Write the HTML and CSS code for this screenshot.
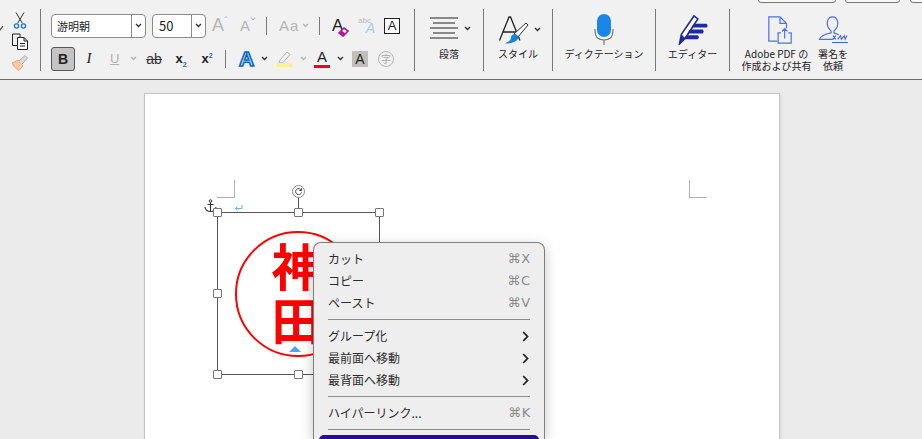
FILE: index.html
```html
<!DOCTYPE html>
<html lang="ja">
<head>
    <meta charset="UTF-8">
    <meta name="viewport" content="width=device-width, initial-scale=1.0">
    <title>Word</title>
    <link rel="stylesheet" href="styles.css">
</head>
<body>
    <header class="ribbon">
        <!-- bits of the title bar buttons peeking in from above -->
        <span class="peek peek-a"></span>
        <span class="peek peek-b"></span>
        <span class="peek peek-c"></span>
        <svg class="peek-chevron" width="4" height="6" viewBox="0 0 4 6"><path d="M-2 3 L0 5 L3 1" fill="none" stroke="#444" stroke-width="1.2"/></svg>

        <div class="group group-clip">
            <svg width="14" height="17" viewBox="0 0 14 17">
                <path d="M3 0.5 L9.5 11.5 M11 0.5 L4.5 11.5" fill="none" stroke="#333" stroke-width="1"/>
                <circle cx="3.5" cy="14" r="2.1" fill="none" stroke="#1f78c8" stroke-width="1.4"/>
                <circle cx="10.5" cy="14" r="2.1" fill="none" stroke="#1f78c8" stroke-width="1.4"/>
            </svg>
            <svg width="18" height="17" viewBox="0 0 18 17">
                <path d="M7 12.5 H1.5 V1 H9 V4" fill="none" stroke="#222" stroke-width="1"/>
                <path d="M6.5 4.5 H13 L16.5 8 V16.5 H6.5 Z M13 4.5 V8 H16.5 M9 10.5 H14 M9 13 H14" fill="#fff" stroke="#222" stroke-width="1"/>
            </svg>
            <svg width="18" height="17" viewBox="0 0 18 17">
                <path d="M1 9 L7 6 L12 12 L8 16.5 Q3 14 1 9 Z" fill="#f6c9a8" stroke="#f0a878" stroke-width="1"/>
                <path d="M8 7 L14 1.5 L16.5 4 L11 10" fill="#ddd" stroke="#aaa" stroke-width="1"/>
            </svg>
        </div>

        <div class="group group-font">
            <div class="row">
                <div class="combo combo-font">
                    <span class="combo-value">游明朝</span>
                    <span class="combo-arrow"><svg class="chev" width="7" height="5" viewBox="0 0 7 5"><path d="M1 1 L3.5 3.5 L6 1"/></svg></span>
                </div>
                <div class="combo combo-size">
                    <span class="combo-value">50</span>
                    <span class="combo-arrow"><svg class="chev" width="7" height="5" viewBox="0 0 7 5"><path d="M1 1 L3.5 3.5 L6 1"/></svg></span>
                </div>
                <span class="glyph grow-a">A<svg width="6" height="4" viewBox="0 0 6 4"><path d="M1 3.5 L3 1 L5 3.5" fill="none" stroke="#8fb6d8"/></svg></span>
                <span class="glyph shrink-a">A<svg width="6" height="4" viewBox="0 0 6 4"><path d="M1 .5 L3 3 L5 .5" fill="none" stroke="#8fb6d8"/></svg></span>
                <span class="vline vline-a"></span>
                <span class="glyph case-a">Aa</span>
                <svg class="chev chev-off case-chev" width="7" height="5" viewBox="0 0 7 5"><path d="M1 1 L3.5 3.5 L6 1"/></svg>
                <span class="vline vline-b"></span>
                <span class="clear-a">A<svg width="11" height="10" viewBox="0 0 11 10"><path d="M1 6 L6 1 L10 4 L5 9 Z" fill="#fff" stroke="#b0189c" stroke-width="1.6"/><path d="M1 6 L3.5 3.5 L7.5 6.5 L5 9 Z" fill="#b0189c"/></svg></span>
                <span class="effect-a"><small>abc</small><b>A</b></span>
                <span class="box-a">A</span>
            </div>
            <div class="row">
                <span class="btn-bold">B</span>
                <span class="tx-italic">I</span>
                <span class="tx-under">U</span>
                <svg class="chev chev-off under-chev" width="7" height="5" viewBox="0 0 7 5"><path d="M1 1 L3.5 3.5 L6 1"/></svg>
                <span class="tx-strike">ab</span>
                <span class="tx-sub">x<sub>2</sub></span>
                <span class="tx-sup">x<sup>2</sup></span>
                <span class="vline vline-c"></span>
                <span class="fx-a">A</span>
                <svg class="chev fx-chev" width="7" height="5" viewBox="0 0 7 5"><path d="M1 1 L3.5 3.5 L6 1"/></svg>
                <svg class="marker" width="17" height="17" viewBox="0 0 17 17">
                    <path d="M4 10 L11 2 L14 4.5 L7 12.5 L3 13 Z" fill="none" stroke="#b5b5b5" stroke-width="1"/>
                    <rect x="0.5" y="13" width="16" height="4" fill="#f6f29a"/>
                </svg>
                <svg class="chev chev-off marker-chev" width="7" height="5" viewBox="0 0 7 5"><path d="M1 1 L3.5 3.5 L6 1"/></svg>
                <span class="color-a">A</span>
                <svg class="chev color-chev" width="7" height="5" viewBox="0 0 7 5"><path d="M1 1 L3.5 3.5 L6 1"/></svg>
                <span class="shade-a">A</span>
                <span class="ruby-a">字</span>
            </div>
        </div>

        <div class="group group-para">
            <div class="big-icon">
                <svg width="29" height="22" viewBox="0 0 29 22">
                    <path d="M1 1 H29 M4 6 H26 M1 11 H29 M4 16 H26 M1 21 H29" stroke="#222" stroke-width="1"/>
                </svg>
                <svg class="chev" width="7" height="5" viewBox="0 0 7 5"><path d="M1 1 L3.5 3.5 L6 1"/></svg>
            </div>
            <span class="label">段落</span>
        </div>

        <div class="group group-style">
            <div class="big-icon">
                <svg width="30" height="28" viewBox="0 0 30 28">
                    <path d="M0.5 24.5 L10 1 H11.5 L21 24.5 M4 16 H17.5" fill="none" stroke="#222" stroke-width="1.3"/>
                    <path d="M15 18 L27 7 L29 9 L19 21 Z" fill="#fff" stroke="#333" stroke-width="1"/>
                    <path d="M15 18 Q19 18 19.5 22 Q17 27.5 6 27.5 Q12 25 12 22 Q12 19 15 18 Z" fill="#1a80d8"/>
                </svg>
                <svg class="chev" width="7" height="5" viewBox="0 0 7 5"><path d="M1 1 L3.5 3.5 L6 1"/></svg>
            </div>
            <span class="label">スタイル</span>
        </div>

        <div class="group group-dict">
            <div class="big-icon">
                <svg width="20" height="31" viewBox="0 0 20 31">
                    <rect x="3" y="0" width="14" height="23" rx="7" fill="#1a86e8"/>
                    <path d="M1 15 V17 Q1 26 10 26 Q19 26 19 17 V15 M10 26 V31" fill="none" stroke="#777" stroke-width="1.2"/>
                </svg>
            </div>
            <span class="label">ディクテーション</span>
        </div>

        <div class="group group-editor">
            <div class="big-icon">
                <svg width="32" height="31" viewBox="0 0 32 32">
                    <path d="M2 31 L4 21 L17 2 L21 5 L8 25 Z" fill="#fff" stroke="#1f2a9c" stroke-width="1.6"/>
                    <path d="M2 31 L4 21 L8 25 Z" fill="#1f2a9c"/>
                    <path d="M17 10 H30 Q32 12 30 14 H14 Z M13 16 H26 Q28 18 26 20 H10 Z M9 22 H21 Q23 24 21 26 H7 Z" fill="#1f2a9c"/>
                </svg>
            </div>
            <span class="label">エディター</span>
        </div>

        <div class="group group-adobe">
            <div class="adobe-btn">
                <svg class="adobe-icon doc-icon" width="26" height="28" viewBox="0 0 26 30">
                    <path d="M10 27 H1 V1 H13 L20 8 V13 M13 1 V8 H20" fill="none" stroke="#4a72ee" stroke-width="1.3"/>
                    <path d="M14 18 H11 V29 H25 V18 H22 M18 24 V14 M15 16.5 L18 13.5 L21 16.5" fill="none" stroke="#4a72ee" stroke-width="1.3"/>
                </svg>
                <span class="label">Adobe PDF の<br>作成および共有</span>
            </div>
            <div class="adobe-btn sign-btn">
                <svg class="adobe-icon" width="32" height="28" viewBox="0 0 32 30">
                    <path d="M14 16 Q9 12 10 6 Q11 1 15.5 1 Q20 1 21 6 Q22 12 17 16 V18 Q20 19 22 20 M14 16 V18 Q3 20 1.5 25 H16" fill="none" stroke="#4a72ee" stroke-width="1.3"/>
                    <path d="M16 21 L19 25 M19 21 L16 25 M21 25 L24 21 L25 25 L28 21 L29 25 L31 21 M15 28.5 H32" fill="none" stroke="#3a5fd8" stroke-width="1.1"/>
                </svg>
                <span class="label">署名を<br>依頼</span>
            </div>
        </div>
    </header>

    <main class="workspace">
        <section class="page">
            <span class="crop crop-left"></span>
            <span class="crop crop-right"></span>

            <svg class="anchor" width="13" height="14" viewBox="0 0 13 14">
                <circle cx="6.5" cy="2" r="1.3" fill="none" stroke="#333"/>
                <path d="M6.5 3 V12.5 M3.5 5.5 H9.5 M1 8 Q1.5 12.5 6.5 12.5 Q11.5 12.5 12 8" fill="none" stroke="#333" stroke-width="1.1"/>
            </svg>
            <svg class="para-mark" width="9" height="7" viewBox="0 0 9 7"><path d="M8 0 V3.5 H1.5 M3.5 1.5 L1.5 3.5 L3.5 5.5" fill="none" stroke="#6cb0ee"/></svg>

            <span class="rotate-stem"></span>
            <svg class="rotate" width="13" height="13" viewBox="0 0 13 13">
                <circle cx="6.5" cy="6.5" r="6" fill="#fff" stroke="#888"/>
                <path d="M9.3 5.2 A3 3 0 1 0 9.5 7.5 M9.6 3.2 V5.5 H7.4" fill="none" stroke="#444"/>
            </svg>

            <div class="shape">
                <div class="stamp">
                    <span class="stamp-text">神<br>田</span>
                </div>
                <span class="handle h-tl"></span>
                <span class="handle h-tc"></span>
                <span class="handle h-tr"></span>
                <span class="handle h-ml"></span>
                <span class="handle h-bl"></span>
                <span class="handle h-bc"></span>
                <span class="text-caret"></span>
            </div>
        </section>

        <nav class="menu">
            <div class="menu-item"><span>カット</span><span class="keys">⌘X</span></div>
            <div class="menu-item"><span>コピー</span><span class="keys">⌘C</span></div>
            <div class="menu-item"><span>ペースト</span><span class="keys">⌘V</span></div>
            <div class="menu-sep"></div>
            <div class="menu-item"><span>グループ化</span><svg class="sub" width="7" height="11" viewBox="0 0 7 11"><path d="M1.2 1 L5.5 5.5 L1.2 10"/></svg></div>
            <div class="menu-item"><span>最前面へ移動</span><svg class="sub" width="7" height="11" viewBox="0 0 7 11"><path d="M1.2 1 L5.5 5.5 L1.2 10"/></svg></div>
            <div class="menu-item"><span>最背面へ移動</span><svg class="sub" width="7" height="11" viewBox="0 0 7 11"><path d="M1.2 1 L5.5 5.5 L1.2 10"/></svg></div>
            <div class="menu-sep"></div>
            <div class="menu-item"><span>ハイパーリンク...</span><span class="keys">⌘K</span></div>
            <div class="menu-sep"></div>
            <div class="menu-active"></div>
        </nav>
    </main>
</body>
</html>
```

FILE: styles.css
```css
html, body {
    margin: 0;
    height: 439px;
    overflow: hidden;
}
body {
    font-family: "Noto Sans CJK JP", "Noto Sans", sans-serif;
    background-color: #ebebeb;
    color: #222;
    display: flex;
    flex-direction: column;
}

/* ribbon */
.ribbon {
    position: relative;
    display: flex;
    align-items: center;
    height: 79px;
    flex-shrink: 0;
    overflow: hidden;
    background-color: #f1f1f1;
    border-bottom: 1px solid #6e6e6e;
}
.peek {
    position: absolute;
    top: -6px;
    height: 7px;
    border: 1px solid #777;
    border-radius: 3px;
    background-color: #f7f7f7;
}
.peek-a { left: 758px; width: 76px; }
.peek-b { left: 845px; width: 53px; }
.peek-c { left: 910px; width: 30px; }
.peek-chevron {
    position: absolute;
    left: 0;
    top: 25px;
}
.group {
    height: 62px;
    box-sizing: border-box;
    border-right: 1px solid #7a7a7a;
    flex-shrink: 0;
}
.group-clip {
    width: 41px;
    display: flex;
    flex-direction: column;
    align-items: center;
    padding: 3px 0 0 0;
    gap: 4px;
}
.group-font {
    width: 374px;
    padding: 5px 0 0 10px;
    display: flex;
    flex-direction: column;
    gap: 9px;
}
.group-para { width: 69px; }
.group-style { width: 69px; }
.group-dict { width: 103px; }
.group-editor { width: 74px; }
.group-adobe {
    border-right: none;
    display: flex;
    padding-left: 12px;
}
.group-para, .group-style, .group-dict, .group-editor {
    display: flex;
    flex-direction: column;
    align-items: center;
}
.big-icon {
    height: 39px;
    padding-top: 2px;
    box-sizing: border-box;
    display: flex;
    align-items: center;
    gap: 6px;
}
.group-para .big-icon { padding: 0 0 0 2px; }
.group-style .big-icon { padding: 3px 0 0 4px; gap: 5px; }
.label {
    font-size: 10px;
    line-height: 12px;
    color: #222;
    text-align: center;
    white-space: nowrap;
}
.row {
    display: flex;
    align-items: center;
    height: 24px;
}
.chev {
    fill: none;
    stroke: #333;
    stroke-width: 1.4;
    flex-shrink: 0;
}
.chev-off { stroke: #b4b4b4; }

.combo {
    display: flex;
    height: 24px;
    box-sizing: border-box;
    border: 1px solid #8a8a8a;
    border-radius: 4px;
    background-color: #fff;
    font-size: 11px;
    line-height: 22px;
}
.combo-font { width: 95px; }
.combo-size { width: 54px; margin-left: 6px; font-size: 13px; }
.combo-value {
    flex: 1;
    padding-left: 5px;
}
.combo-size .combo-value { padding-left: 6px; }
.combo-arrow {
    width: 13px;
    border-left: 1px solid #8a8a8a;
    display: flex;
    align-items: center;
    justify-content: center;
}

.glyph {
    font-family: "Liberation Sans", sans-serif;
    color: #b5b5b5;
    font-size: 16px;
    display: flex;
    align-items: flex-start;
}
.grow-a { margin-left: 6px; font-size: 18px; width: 16px; }
.shrink-a { margin-left: 12px; font-size: 15px; width: 17px; }
.vline {
    width: 1px;
    height: 18px;
    background-color: #7a7a7a;
    flex-shrink: 0;
}
.vline-a { margin-left: 9px; }
.case-a { margin-left: 12px; width: 23px; font-size: 15px; letter-spacing: 1px; }
.case-chev { margin-left: 0; }
.vline-b { margin-left: 10px; }
.clear-a {
    font-family: "Liberation Sans", sans-serif;
    margin-left: 12px;
    width: 17px;
    font-size: 17px;
    position: relative;
    display: flex;
}
.clear-a svg { position: absolute; left: 6px; top: 11px; }
.effect-a {
    font-family: "Liberation Sans", sans-serif;
    margin-left: 9px;
    width: 17px;
    height: 18px;
    position: relative;
    display: flex;
    justify-content: flex-end;
    align-items: flex-end;
}
.effect-a b {
    font-size: 14px;
    line-height: 13px;
    font-weight: normal;
    font-style: italic;
    color: #a9cbe8;
}
.effect-a small {
    position: absolute;
    left: 0;
    top: 0;
    font-size: 8px;
    line-height: 8px;
    color: #bbb;
}
.box-a {
    font-family: "Liberation Sans", sans-serif;
    margin-left: 9px;
    width: 16px;
    height: 16px;
    box-sizing: border-box;
    border: 1px solid #222;
    font-size: 13px;
    line-height: 14px;
    text-align: center;
    background-color: #fff;
}

.btn-bold, .tx-italic, .tx-under, .tx-strike, .tx-sub, .tx-sup, .fx-a, .color-a, .shade-a {
    font-family: "Liberation Sans", sans-serif;
    text-align: center;
    flex-shrink: 0;
}
.btn-bold {
    width: 24px;
    height: 24px;
    box-sizing: border-box;
    border: 1px solid #555;
    border-radius: 3px;
    background-color: #c4c4c4;
    font-weight: bold;
    font-size: 14px;
    line-height: 22px;
}
.tx-italic {
    font-family: "Liberation Serif", serif;
    font-style: italic;
    font-size: 15px;
    width: 10px;
    margin-left: 9px;
}
.tx-under {
    width: 9px;
    margin-left: 16px;
    font-size: 13px;
    color: #b0b0b0;
    text-decoration: underline;
}
.under-chev { margin-left: 11px; }
.tx-strike {
    width: 16px;
    margin-left: 9px;
    font-size: 14px;
    text-decoration: line-through;
    color: #333;
}
.tx-sub, .tx-sup {
    font-weight: bold;
    font-size: 13px;
    width: 12px;
}
.tx-sub { margin-left: 13px; }
.tx-sup { margin-left: 14px; }
.tx-sub sub, .tx-sup sup {
    font-size: 7px;
    color: #2a6fb0;
    line-height: 0;
}
.vline-c { margin-left: 12px; }
.fx-a {
    width: 17px;
    margin-left: 12px;
    font-size: 21px;
    line-height: 22px;
    font-weight: bold;
    color: #d8ecfc;
    -webkit-text-stroke: 1.6px #0a66c2;
}
.fx-chev { margin-left: 6px; }
.marker { margin-left: 8px; }
.marker-chev { margin-left: 7px; }
.color-a {
    width: 16px;
    height: 19px;
    margin-left: 7px;
    font-size: 15px;
    line-height: 15px;
    box-sizing: border-box;
    border-bottom: 3px solid #ff0000;
}
.color-chev { margin-left: 7px; }
.shade-a {
    width: 16px;
    height: 16px;
    margin-left: 8px;
    background-color: #c0bfbb;
    font-size: 14px;
    line-height: 16px;
}
.ruby-a {
    width: 16px;
    height: 16px;
    margin-left: 10px;
    box-sizing: border-box;
    border: 1px solid #b5b5b5;
    border-radius: 50%;
    color: #aaa;
    font-size: 10px;
    line-height: 14px;
    text-align: center;
}

.adobe-btn {
    width: 69px;
    display: flex;
    flex-direction: column;
    align-items: center;
}
.sign-btn { width: 40px; margin-left: 2px; }
.adobe-icon {
    margin: 7px 0 4px;
    flex-shrink: 0;
}
.doc-icon { margin-left: 7px; }

/* page area */
.workspace {
    position: relative;
    flex: 1;
    min-height: 0;
    overflow: hidden;
    padding: 13px 0 0 144px;
}
.page {
    position: relative;
    width: 634px;
    height: 345px;
    border: 1px solid #c6c6c6;
    border-bottom: none;
    background-color: #fff;
    box-shadow: 1px 1px 3px rgba(0, 0, 0, 0.08);
}
.crop {
    position: absolute;
    top: 86px;
    width: 18px;
    height: 18px;
    box-sizing: border-box;
    border-bottom: 1px solid #b0b0b0;
}
.crop-left {
    left: 72px;
    border-right: 1px solid #b0b0b0;
}
.crop-right {
    left: 544px;
    border-left: 1px solid #b0b0b0;
}
.anchor {
    position: absolute;
    left: 59px;
    top: 105px;
}
.para-mark {
    position: absolute;
    left: 89px;
    top: 111px;
}
.rotate {
    position: absolute;
    left: 147px;
    top: 91px;
}
.rotate-stem {
    position: absolute;
    left: 153px;
    top: 103px;
    width: 1px;
    height: 15px;
    background-color: #555;
}
.shape {
    position: absolute;
    left: 72px;
    top: 118px;
    width: 161px;
    height: 161px;
    border: 1px solid #555;
}
.stamp {
    position: absolute;
    left: 17px;
    top: 18px;
    width: 126px;
    height: 126px;
    box-sizing: border-box;
    padding: 0 3px 7px 0;
    border: 2px solid #ff0000;
    border-radius: 50%;
    display: flex;
    align-items: center;
    justify-content: center;
}
.stamp-text {
    color: #ff0000;
    font-size: 50px;
    font-weight: bold;
    line-height: 54px;
    text-align: center;
}
.handle {
    position: absolute;
    width: 9px;
    height: 9px;
    box-sizing: border-box;
    border: 1px solid #777;
    border-radius: 1px;
    background-color: #fff;
}
.h-tl { left: -5px; top: -5px; }
.h-tc { left: 76px; top: -5px; }
.h-tr { left: 157px; top: -5px; }
.h-ml { left: -5px; top: 76px; }
.h-bl { left: -5px; top: 157px; }
.h-bc { left: 76px; top: 157px; }
.text-caret {
    position: absolute;
    left: 71px;
    top: 133px;
    width: 0;
    height: 0;
    border-left: 6px solid transparent;
    border-right: 6px solid transparent;
    border-bottom: 6px solid #4da3f5;
}

/* context menu */
.menu {
    position: absolute;
    left: 313px;
    top: 162px;
    width: 232px;
    height: 197px;
    overflow: hidden;
    box-sizing: border-box;
    padding: 5px 14px 0;
    background-color: #eeeeee;
    border: 1px solid #7f7f7f;
    border-bottom: none;
    border-radius: 8px 8px 0 0;
    box-shadow: 0 4px 14px rgba(0, 0, 0, 0.22);
    font-size: 12px;
    color: #2c2c2c;
}
.menu-item {
    height: 22px;
    display: flex;
    align-items: center;
    justify-content: space-between;
    line-height: 22px;
}
.keys {
    font-family: "DejaVu Sans", sans-serif;
    color: #8a8a8a;
    font-size: 13px;
    letter-spacing: 0.8px;
    margin-right: -1px;
}
.sub {
    fill: none;
    stroke: #222;
    stroke-width: 1.8;
    margin-right: 1px;
}
.menu-sep {
    height: 11px;
    box-sizing: border-box;
    padding-top: 5px;
}
.menu-sep::before {
    content: "";
    display: block;
    height: 1px;
    background-color: #8c8c8c;
}
.menu-active {
    height: 30px;
    margin: 0 -9px;
    border-radius: 5px 5px 0 0;
    background-color: #2a0a96;
}
```
